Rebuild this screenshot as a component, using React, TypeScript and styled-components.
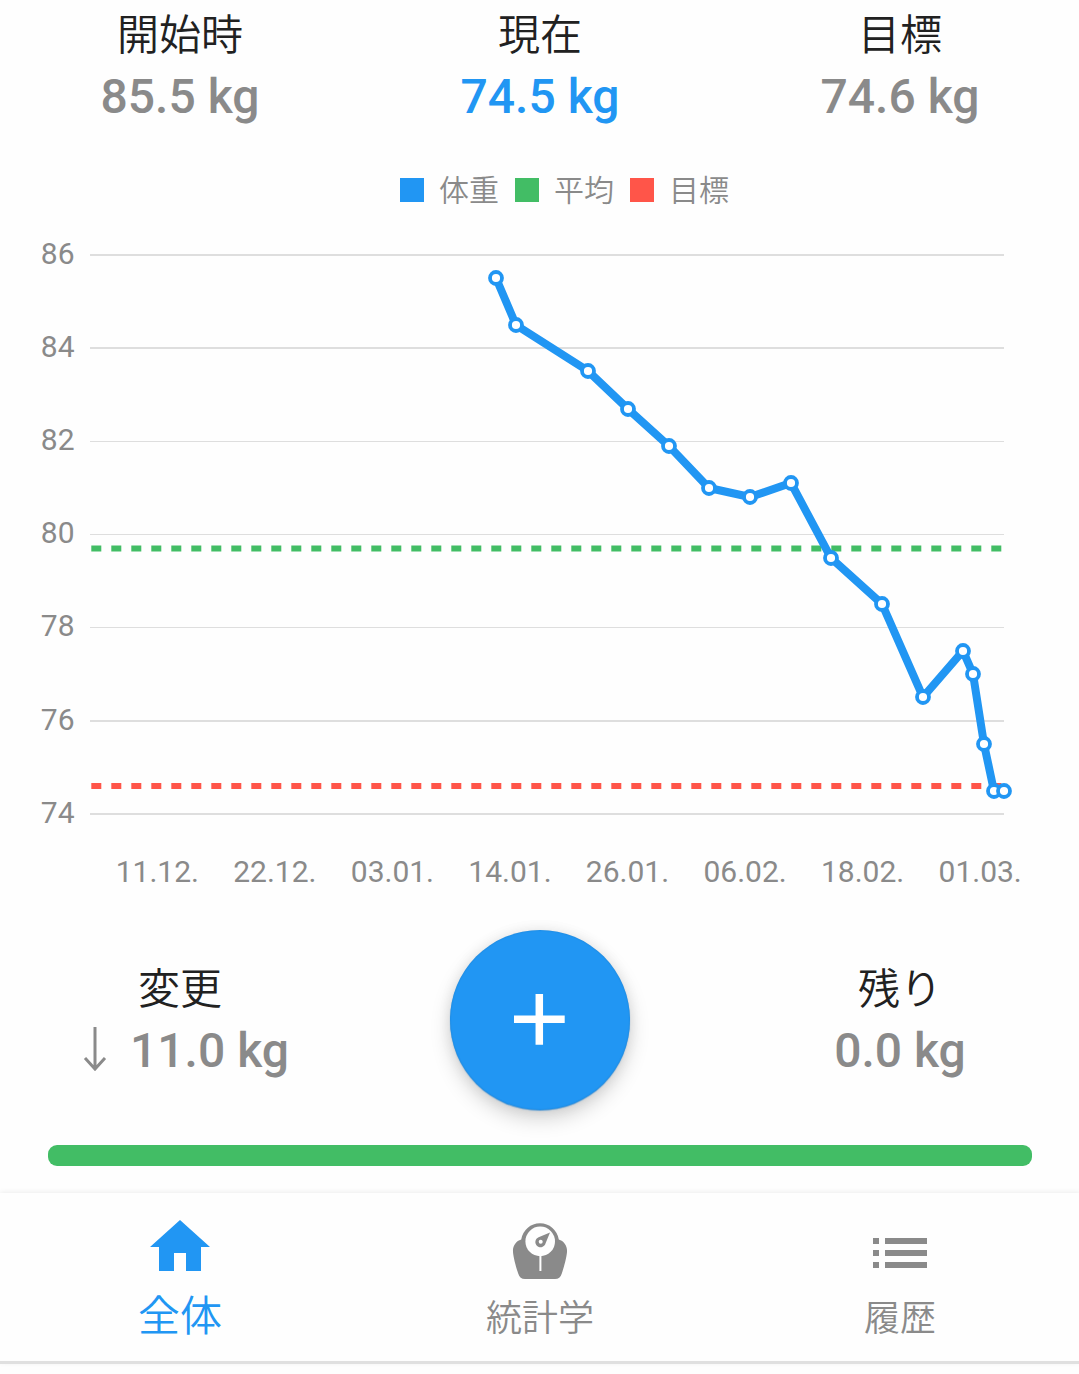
import React from "react";
import styled, { createGlobalStyle } from "styled-components";

const color = {
  blue: "#2196f3",
  green: "#42bd65",
  red: "#ff5549",
  ink: "#212121",
  gray: "#8a8a8a",
  grid: "#dedede",
};

const GlobalStyle = createGlobalStyle`
  body {
    margin: 0;
    background: #fefefe;
    overflow: hidden;
    font-family: Roboto, "Noto Sans CJK JP", sans-serif;
  }
  * { box-sizing: border-box; }
`;

const Screen = styled.main`
  display: flex;
  flex-direction: column;
  width: 1080px;
  height: 1374px;
`;

const Summary = styled.header`
  display: grid;
  grid-template-columns: repeat(3, 360px);
  height: 160px;
  padding-top: 11px;
`;

const Stat = styled.div`
  display: flex;
  flex-direction: column;
  align-items: center;
`;

const StatTitle = styled.span`
  font-size: 42px;
  font-weight: 350;
  line-height: 50px;
  color: ${color.ink};
`;

const StatValue = styled.span<{ $active?: boolean; $trend?: boolean }>`
  display: flex;
  align-items: center;
  gap: 23px;
  margin-top: 8px;
  padding-left: ${(p) => (p.$trend ? 12 : 0)}px;
  font-size: 48px;
  font-weight: 500;
  line-height: 56px;
  white-space: pre;
  color: ${(p) => (p.$active ? color.blue : color.gray)};
`;

const Legend = styled.div`
  display: flex;
  align-items: center;
  gap: 16px;
  height: 60px;
  padding-left: 400px;
`;

const LegendItem = styled.span`
  display: flex;
  align-items: center;
  gap: 15px;
  font-size: 30px;
  font-weight: 350;
  line-height: 40px;
  color: ${color.gray};
`;

const LegendLabel = styled.span`
  padding-top: 2px;
`;

const Swatch = styled.i<{ $fill: string }>`
  width: 24px;
  height: 24px;
  background: ${(p) => p.$fill};
`;

const Chart = styled.svg`
  display: block;
  width: 1080px;
  height: 700px;
  flex: none;
  font-size: 30px;
`;

const Footer = styled.section`
  display: grid;
  grid-template-columns: repeat(3, 360px);
  height: 225px;
  padding-top: 10px;
`;

const FooterStat = styled(Stat)`
  padding-top: 35px;
`;

const AddButton = styled.button`
  display: flex;
  align-items: center;
  justify-content: center;
  justify-self: center;
  width: 180px;
  height: 180px;
  padding: 0;
  border: 0;
  border-radius: 50%;
  background: ${color.blue};
  box-shadow: 0 1px 1px rgba(33, 130, 210, 0.6), 0 9px 20px rgba(0, 0, 0, 0.17),
    0 0 14px rgba(0, 0, 0, 0.07), inset 0 0 2px rgba(0, 0, 0, 0.15);
`;

const Progress = styled.div`
  flex: none;
  height: 21px;
  margin: 0 48px;
  border-radius: 9px;
  background: ${color.green};
`;

const Nav = styled.nav`
  display: grid;
  grid-template-columns: repeat(3, 360px);
  flex: none;
  height: 171px;
  margin-top: 27px;
  border-bottom: 3px solid #e0e0e0;
  background: #fefefe;
  box-shadow: 0 -1px 5px rgba(0, 0, 0, 0.07);
`;

const NavItem = styled.a<{ $active?: boolean }>`
  display: flex;
  flex-direction: column;
  align-items: center;
  gap: ${(p) => (p.$active ? 9 : 5)}px;
  padding-top: ${(p) => (p.$active ? 18 : 24)}px;
  color: ${(p) => (p.$active ? color.blue : color.gray)};
  font-size: ${(p) => (p.$active ? 42 : 36)}px;
  font-weight: 350;
  line-height: 50px;
`;

const Icon = styled.svg`
  display: block;
  width: 72px;
  height: 72px;
  fill: currentColor;
`;

const days = [
  [496, 278], [516, 325], [588, 371], [628, 409], [669, 446], [709, 488],
  [750, 497], [791, 483], [831, 558], [882, 604], [923, 697], [963, 651],
  [973, 674], [984, 744], [994, 791], [1004, 791],
];

const gridRows = [
  { label: "86", y: 254, h: 2 },
  { label: "84", y: 347, h: 2 },
  { label: "82", y: 441, h: 1 },
  { label: "80", y: 534, h: 1 },
  { label: "78", y: 627, h: 1 },
  { label: "76", y: 720, h: 2 },
  { label: "74", y: 813, h: 2 },
];

const dates = ["11.12.", "22.12.", "03.01.", "14.01.", "26.01.", "06.02.", "18.02.", "01.03."];

function WeightChart() {
  return (
    <Chart viewBox="0 220 1080 700">
      {gridRows.map((g) => (
        <g key={g.label}>
          <rect x="90" y={g.y} width="914" height={g.h} fill={color.grid} />
          <text x="74.600" y={g.y + 8 + g.h} textAnchor="end" fill={color.gray}>
            {g.label}
          </text>
        </g>
      ))}
      {dates.map((d, i) => (
        <text key={d} x={157.3 + i * 117.55} y="882" textAnchor="middle" fill={color.gray}>
          {d}
        </text>
      ))}
      <path d="M91.3 548.4H1004" stroke={color.green} strokeWidth="6" strokeDasharray="10 10" />
      <path d="M91.3 786H1004" stroke={color.red} strokeWidth="6" strokeDasharray="10 10" />
      <polyline
        points={days.map((p) => p.join(",")).join(" ")}
        fill="none"
        stroke={color.blue}
        strokeWidth="8"
      />
      {days.map(([x, y]) => (
        <circle key={x} cx={x} cy={y} r="6" fill="#fff" stroke={color.blue} strokeWidth="3.8" />
      ))}
    </Chart>
  );
}

export default function App() {
  return (
    <>
      <GlobalStyle />
      <Screen>
        <Summary>
          <Stat>
            <StatTitle>開始時</StatTitle>
            <StatValue>85.5 kg</StatValue>
          </Stat>
          <Stat>
            <StatTitle>現在</StatTitle>
            <StatValue $active>74.5 kg</StatValue>
          </Stat>
          <Stat>
            <StatTitle>目標</StatTitle>
            <StatValue>74.6 kg</StatValue>
          </Stat>
        </Summary>
        <Legend>
          <LegendItem><Swatch $fill={color.blue} /><LegendLabel>体重</LegendLabel></LegendItem>
          <LegendItem><Swatch $fill={color.green} /><LegendLabel>平均</LegendLabel></LegendItem>
          <LegendItem><Swatch $fill={color.red} /><LegendLabel>目標</LegendLabel></LegendItem>
        </Legend>
        <WeightChart />
        <Footer>
          <FooterStat>
            <StatTitle>変更</StatTitle>
            <StatValue $trend>
              <svg width="24" height="48" viewBox="0 0 24 48" fill="none" stroke="currentColor" strokeWidth="3">
                <path d="M12 0V42M2 31L12 42L22 31" />
              </svg>
              11.0 kg
            </StatValue>
          </FooterStat>
          <AddButton aria-label="+">
            <svg width="52" height="52" viewBox="0 0 52 52" stroke="#fff" strokeWidth="7.5">
              <path d="M0 25.3H50.7M25.3 0V50.7" />
            </svg>
          </AddButton>
          <FooterStat>
            <StatTitle>残り</StatTitle>
            <StatValue>0.0 kg</StatValue>
          </FooterStat>
        </Footer>
        <Progress />
        <Nav>
          <NavItem $active>
            <Icon viewBox="0 0 24 24">
              <path d="M10 20v-6h4v6h5v-8h3L12 3 2 12h3v8z" />
            </Icon>
            全体
          </NavItem>
          <NavItem>
            <Icon viewBox="0 0 72 72">
              <path d="M17.200 22.500A19 19 0 0 1 54.800 22.500C60 24 63.500 29 63 35C62.500 41 60 50 57.800 56.500C56.600 60.200 54.500 62 51 62H21C17.500 62 15.400 60.200 14.200 56.500C12 50 9.500 41 9 35C8.500 29 12 24 17.200 22.500Z" />
              <circle cx="36.200" cy="24.400" r="14.800" fill="#fefefe" />
              <path d="M36.400 38V54" stroke="#fefefe" strokeWidth="2" />
              <path d="M46 15.500L41.600 26.200A5.200 5.200 0 1 1 34.600 20.200Z" />
              <circle cx="36.700" cy="24.800" r="2" fill="#fefefe" />
            </Icon>
            統計学
          </NavItem>
          <NavItem>
            <Icon viewBox="0 0 24 24">
              <path d="M3 13h2v-2H3v2zm0 4h2v-2H3v2zm0-8h2V7H3v2zm4 4h14v-2H7v2zm0 4h14v-2H7v2zM7 7v2h14V7H7z" />
            </Icon>
            履歴
          </NavItem>
        </Nav>
      </Screen>
    </>
  );
}
